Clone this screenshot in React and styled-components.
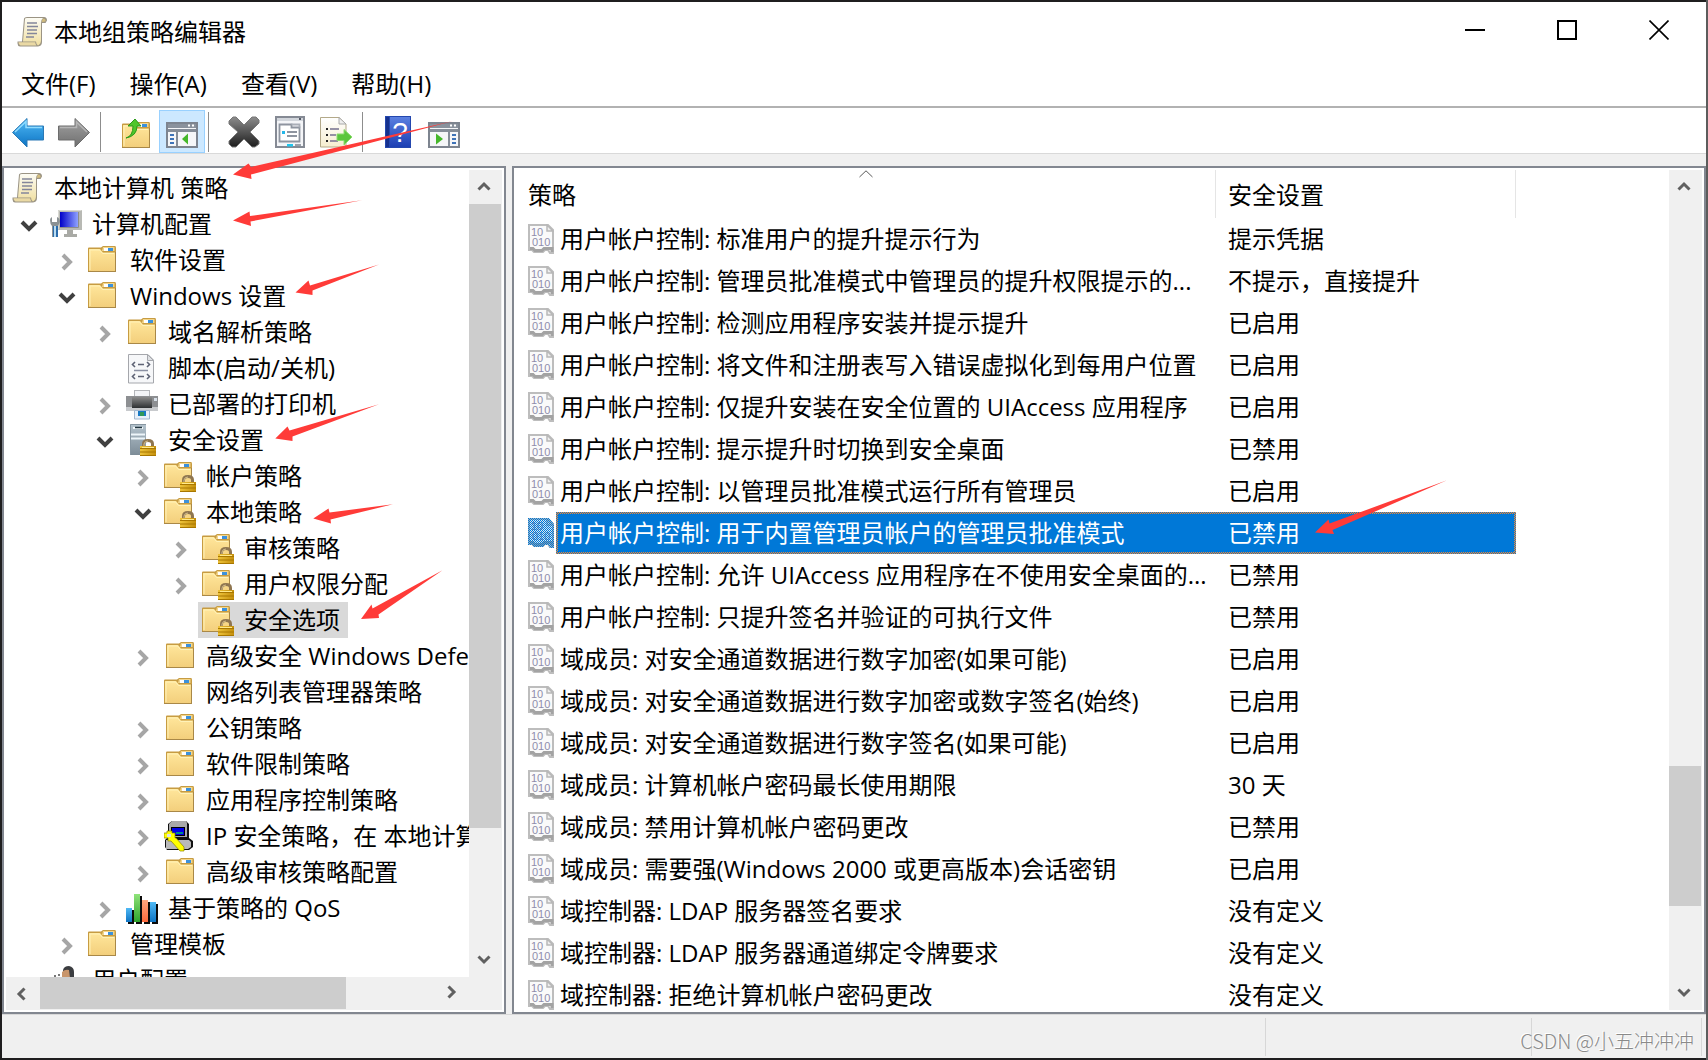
import React from 'react'
import styled, { createGlobalStyle, css } from 'styled-components'


// level is the depth in the tree, state says which chevron the row gets (nothing = leaf)

const treeItems = [
    { name: '本地计算机 策略', level: 0, icon: 'scroll' },
    { name: '计算机配置', level: 1, icon: 'computer', state: 'open' },
    { name: '软件设置', level: 2, icon: 'folderLeft', state: 'closed' },
    { name: 'Windows 设置', level: 2, icon: 'folderLeft', state: 'open' },
    { name: '域名解析策略', level: 3, icon: 'folder', state: 'closed' },
    { name: '脚本(启动/关机)', level: 3, icon: 'script' },
    { name: '已部署的打印机', level: 3, icon: 'printer', state: 'closed' },
    { name: '安全设置', level: 3, icon: 'server', state: 'open' },
    { name: '帐户策略', level: 4, icon: 'locked', state: 'closed' },
    { name: '本地策略', level: 4, icon: 'locked', state: 'open' },
    { name: '审核策略', level: 5, icon: 'locked', state: 'closed' },
    { name: '用户权限分配', level: 5, icon: 'locked', state: 'closed' },
    { name: '安全选项', level: 5, icon: 'locked', selected: true },
    { name: '高级安全 Windows Defender', level: 4, icon: 'folder', state: 'closed' },
    { name: '网络列表管理器策略', level: 4, icon: 'folderLeft' },
    { name: '公钥策略', level: 4, icon: 'folder', state: 'closed' },
    { name: '软件限制策略', level: 4, icon: 'folder', state: 'closed' },
    { name: '应用程序控制策略', level: 4, icon: 'folder', state: 'closed' },
    { name: 'IP 安全策略，在 本地计算机', level: 4, icon: 'ipsec', state: 'closed' },
    { name: '高级审核策略配置', level: 4, icon: 'folder', state: 'closed' },
    { name: '基于策略的 QoS', level: 3, icon: 'qos', state: 'closed' },
    { name: '管理模板', level: 2, icon: 'folderLeft', state: 'closed' },
    { name: '用户配置', level: 1, icon: 'user' },
]

const policies = [
    ['用户帐户控制: 标准用户的提升提示行为', '提示凭据'],
    ['用户帐户控制: 管理员批准模式中管理员的提升权限提示的...', '不提示，直接提升'],
    ['用户帐户控制: 检测应用程序安装并提示提升', '已启用'],
    ['用户帐户控制: 将文件和注册表写入错误虚拟化到每用户位置', '已启用'],
    ['用户帐户控制: 仅提升安装在安全位置的 UIAccess 应用程序', '已启用'],
    ['用户帐户控制: 提示提升时切换到安全桌面', '已禁用'],
    ['用户帐户控制: 以管理员批准模式运行所有管理员', '已启用'],
    ['用户帐户控制: 用于内置管理员帐户的管理员批准模式', '已禁用'],
    ['用户帐户控制: 允许 UIAccess 应用程序在不使用安全桌面的...', '已禁用'],
    ['用户帐户控制: 只提升签名并验证的可执行文件', '已禁用'],
    ['域成员: 对安全通道数据进行数字加密(如果可能)', '已启用'],
    ['域成员: 对安全通道数据进行数字加密或数字签名(始终)', '已启用'],
    ['域成员: 对安全通道数据进行数字签名(如果可能)', '已启用'],
    ['域成员: 计算机帐户密码最长使用期限', '30 天'],
    ['域成员: 禁用计算机帐户密码更改', '已禁用'],
    ['域成员: 需要强(Windows 2000 或更高版本)会话密钥', '已启用'],
    ['域控制器: LDAP 服务器签名要求', '没有定义'],
    ['域控制器: LDAP 服务器通道绑定令牌要求', '没有定义'],
    ['域控制器: 拒绝计算机帐户密码更改', '没有定义'],
]

const selectedPolicy = 7

// Every arrow is: tip, upper barb, upper neck, tail, lower neck, lower barb
const arrows = [
    '233,174.5 248.5,163.5 251,167 453,121 251,174.5 251.5,179',
    '233,220.5 249.5,211.5 250,216 362,200.3 250.5,221.5 251,226',
    '295.5,292.5 308.5,280.5 310,285.5 379,264.5 312.5,290.5 312.5,295',
    '275.3,438.5 287.5,426.5 289.5,430.5 379,404.3 292.5,436.5 292.5,441',
    '313.3,518.5 328.5,508.5 329.5,512.5 393,504.3 330.5,519.5 331,523.5',
    '361,619 371.5,604.5 372.5,608.5 442.5,570.3 378.5,614.5 379,618',
    '1315,532.5 1328.5,519.5 1329.5,523.5 1447,480.3 1332.5,530 1334,534',
]

function ScrollArt() {
    return (
        <g transform="translate(-1 0)">
            <path d="M8 2.5Q8.5 1 11 1H28Q31 1 31 4.500L29.500 7H26V26Q26 30 22 30.500H4Q1.500 30 1.500 27.500V25.500H6Z" fill="#9b9484" />
            <path d="M9 3Q9 2 11 2H27Q25 3.500 25 7V24Q25 28 22 29.500Q20 28 20 25.500H7Z" fill="url(#paper)" />
            <path d="M2.500 26.300H19.200Q19.500 28.800 20.500 29.600H4.500Q2.500 29 2.500 26.300Z" fill="#ead9a4" />
            <path d="M27 2.500Q30 2.500 29.500 5.500L26 6Q26 3 27 2.500Z" fill="#d3bd7d" />
            <path d="M11 7H21M11 10.500H22M11 14H21M11 17.500H21M10 21H18" stroke="#84869a" strokeWidth="1.500" />
        </g>
    )
}

function FolderArt() {
    return (
        <>
            <path d="M2 4.500Q2 3.500 3 3.500H15L17 2H29Q30 2 30 4V28H2Z" fill="#c79c42" />
            <path d="M17 3H28.500V7H16Z" fill="#f3d68c" />
            <rect x="18" y="4" width="5" height="3" fill="#fff" />
            <rect x="22" y="4" width="5" height="3" fill="#3b91dc" />
            <path d="M3 5H14L17 8.500H29V27H3Z" fill="url(#folder)" />
            <path d="M4 26V6H13.500L16.500 9.500H28" fill="none" stroke="#fff2b8" />
            <path d="M2 27.500H30M29.500 8V28" stroke="#a98847" />
        </>
    )
}

function LockArt() {
    return (
        <>
            <path d="M19.500 23V20Q19.500 16.500 24 16.500Q28.500 16.500 28.500 20V23" fill="none" stroke="#8f7650" strokeWidth="3" />
            <path d="M20 22V20Q20.500 17 24 17" fill="none" stroke="#d2bd8d" />
            <rect x="16" y="22" width="16" height="10" fill="url(#lock)" />
            <path d="M16 24.500H32M16 28H32M16 31.500H32" stroke="#a87700" />
            <path d="M18 23.500H30" stroke="#ffe98c" />
        </>
    )
}

function Art({ name }) {
    switch (name) {
        case 'scroll':
            return <ScrollArt />
        case 'folder':
            return <FolderArt />
        case 'folderLeft':
            return <g transform="translate(-2 0)"><FolderArt /></g>
        case 'locked':
            return (
                <>
                    <g transform="translate(-2 0)"><FolderArt /></g>
                    <LockArt />
                </>
            )
        case 'computer':
            return (
                <>
                    <rect x="8" y="2" width="24" height="20" fill="#b8b9b4" />
                    <path d="M8.500 21.500V2.500H31.500" fill="none" stroke="#d9d9d2" />
                    <rect x="10" y="4" width="18" height="15" fill="url(#screen)" />
                    <path d="M28.500 4V19.500H10" fill="none" stroke="#8c8d8a" />
                    <path d="M17 22H23V26H27V29H14V26H17Z" fill="#a9aaa5" />
                    <path d="M0 12Q0 10 2 9V14H7V9Q10 10 10 14L8 18V29H2V18Q0 16 0 12Z" fill="#8b9194" />
                    <rect x="3" y="18" width="5" height="11" fill="#2b6cab" />
                    <rect x="4" y="18" width="2" height="11" fill="#b9dcf2" />
                </>
            )
        case 'script':
            return (
                <>
                    <path d="M2.500 2.500H22L27.500 8V31H2.500Z" fill="#f6f7f9" stroke="#a5a7ac" />
                    <path d="M21.500 2.500V8.500H27.500Z" fill="#dfe1e4" stroke="#a5a7ac" />
                    <path d="M9 10L6.500 12.500L9 15M21 10L23.500 12.500L21 15M12 12.500H18M9 22L6.500 24.500L9 27M21 22L23.500 24.500L21 27M12 24.500H18" fill="none" stroke="#5d6274" strokeWidth="1.600" />
                    <path d="M8 18.500H22" stroke="#8b90a3" strokeWidth="1.500" />
                </>
            )
        case 'printer':
            return (
                <>
                    <rect x="8.500" y="2.500" width="15" height="9" fill="#f2f3f6" stroke="#b4b6ba" />
                    <rect x="0" y="8" width="32" height="14" fill="#8d8f92" />
                    <rect x="0" y="19" width="32" height="4" fill="#c8cacd" />
                    <rect x="6" y="9" width="20" height="11" fill="url(#dark)" />
                    <rect x="28" y="10" width="3" height="3" fill="#d7dfe8" />
                    <path d="M8.500 22.500H23.500V31H8.500Z" fill="#e7f0fa" stroke="#a2b7cf" />
                    <rect x="12" y="23" width="8" height="5" fill="#1979c4" />
                    <rect x="14" y="24" width="4" height="4" fill="#2f9959" />
                </>
            )
        case 'server':
            return (
                <>
                    <rect x="4" y="0" width="16" height="31" fill="url(#server)" />
                    <path d="M4.500 31V.500H20" fill="none" stroke="#8796a1" />
                    <path d="M7 4H17M5 10.500H19M5 14.500H19" stroke="#eef6fa" strokeWidth="2" />
                    <path d="M9 3.500H16" stroke="#21343f" strokeWidth="1.500" />
                    <g transform="translate(-2 0)"><LockArt /></g>
                </>
            )
        case 'ipsec':
            return (
                <>
                    <path d="M4 4L8 1H22L25 4V18L29 21V27L25 30H3L1 27V20L4 17Z" fill="#111" />
                    <path d="M5 4L8 1H22L23 3V17H5Z" fill="#a9a9a9" />
                    <path d="M2 20H25L27 22V27L24 29H2Z" fill="#b9b9b9" />
                    <rect x="7" y="7" width="14" height="9" fill="#000" />
                    <rect x="8" y="8" width="12" height="7" fill="#0000e8" />
                    <path d="M12 13H19" stroke="#008b8b" strokeWidth="2" />
                    <path d="M0 13H3V11H8V13H11V18H12L20 27V31H16L7 21H4V18H0Z" fill="#ff0" stroke="#8a8000" strokeWidth=".700" />
                    <rect x="3" y="14" width="4" height="3" fill="#e0e0e0" />
                </>
            )
        case 'qos':
            return (
                <>
                    <path d="M2 18H8V32H2ZM10 4H16V32H10ZM18 10H24V32H18ZM26 12H32V32H26Z" fill="#0b0b0b" />
                    <rect x="0" y="16" width="6" height="14" fill="url(#blue)" />
                    <rect x="8" y="2" width="6" height="28" fill="url(#green)" />
                    <rect x="16" y="8" width="6" height="22" fill="url(#orange)" />
                    <rect x="24" y="10" width="6" height="20" fill="url(#blue)" />
                </>
            )
        case 'user':
            return (
                <>
                    <path d="M13 6Q14 2 19 2Q24 3 24 8V14H20Q13 12 13 6Z" fill="#3b3d40" />
                    <path d="M12 8Q15 5 19 6L20 14H12Z" fill="#c8956b" />
                    <path d="M4 12H6M8 11H10M9 14H11" stroke="#777" strokeWidth="2" />
                </>
            )
        case 'back':
            return (
                <>
                    <path d="M.500 16.500L15 2.500V10H31.500V24H15V31Z" fill="url(#blue)" stroke="#2b79b5" />
                    <path d="M3 16L14 5.500V11.500H30" fill="none" stroke="#8fdcff" strokeWidth="1.500" />
                </>
            )
        case 'forward':
            return (
                <>
                    <path d="M31.500 16.500L17 2.500V10H.500V24H17V31Z" fill="url(#gray)" stroke="#6c6c6c" />
                    <path d="M2 11.500H18.500V6L29 16" fill="none" stroke="#b5b5b5" strokeWidth="1.500" />
                </>
            )
        case 'up':
            return (
                <>
                    <g transform="translate(0 4)"><FolderArt /></g>
                    <path d="M6 22Q13 20 13 10H8L15 3L21 10H17Q17 20 6 22Z" fill="#4fc62c" stroke="#2c9918" />
                </>
            )
        case 'tree':
        case 'actions':
            return (
                <>
                    <rect x="1" y="7" width="30" height="24" fill="#f5f6f8" stroke="#7d848f" strokeWidth="2" />
                    <rect x="2" y="8" width="28" height="4" fill="#8a929d" />
                    <path d="M22 9.500H24M26 9.500H28" stroke="#fff" strokeWidth="2" />
                    <path d="M2 14.500H30" stroke="#858d98" strokeWidth="3" />
                    {name === 'tree' ? (
                        <>
                            <path d="M11 16V30" stroke="#858d98" strokeWidth="2" />
                            <path d="M4 19H8M4 23H8M4 27H8" stroke="#3e73b8" strokeWidth="2" />
                            <path d="M16 23L22 17.500V28.500Z" fill="#45b72a" />
                        </>
                    ) : (
                        <>
                            <path d="M21 16V30" stroke="#858d98" strokeWidth="2" />
                            <path d="M24 19H28M24 23H28M24 27H28" stroke="#3e73b8" strokeWidth="2" />
                            <path d="M15 23L8 17.500V28.500Z" fill="#45b72a" />
                        </>
                    )}
                </>
            )
        case 'delete':
            return (
                <path d="M1 5L5 1H8L16 9L24 1H28L31 4V7L22 16L31 25V28L27 31H24L16 23L8 31H4L1 28V25L10 16L1 8Z" fill="url(#cross)" stroke="#777" />
            )
        case 'properties':
            return (
                <>
                    <rect x="2" y="1" width="28" height="30" fill="#f4f5f8" stroke="#858a94" strokeWidth="2" />
                    <path d="M3 3.500H29" stroke="#d2d6dc" strokeWidth="3" />
                    <rect x="25" y="2" width="2" height="2" fill="#555b67" />
                    <path d="M5.500 8.500H17.500V11.500H25.500V25.500H5.500Z" fill="#fff" stroke="#8e949f" strokeWidth="1.800" />
                    <path d="M17.500 8.500H25.500V11.500" fill="none" stroke="#a9aeb7" strokeWidth="1.800" />
                    <path d="M13 16H23M13 20H23" stroke="#8e949f" strokeWidth="2" />
                    <rect x="8" y="15" width="3" height="3" fill="#24b7ea" />
                    <rect x="13" y="28" width="6" height="2.500" fill="#20c6ed" />
                    <path d="M21 29H27" stroke="#9aa0aa" strokeWidth="2" />
                </>
            )
        case 'export':
            return (
                <>
                    <path d="M.500 1.500H19L26 8V31H.500Z" fill="url(#sheet)" stroke="#b3a989" />
                    <path d="M19 1.500V8H26Z" fill="#eee" stroke="#aaa" />
                    <path d="M6 13H8M6 19H8M6 25H8" stroke="#222" strokeWidth="2" />
                    <path d="M10 13H19M10 19H16M10 25H18" stroke="#75708f" strokeWidth="1.500" />
                    <path d="M17 18H24V13.500L32 21L24 29V24.500H17Z" fill="#5bc63c" stroke="#8bdc6e" />
                </>
            )
        case 'help':
            return (
                <>
                    <rect x="3" y="0" width="26" height="32" fill="#2447ae" />
                    <rect x="8" y="1" width="20" height="30" fill="url(#help)" />
                    <path d="M5.500 1V31" stroke="#16318d" strokeWidth="3" />
                    <HelpMark x="18" y="26">?</HelpMark>
                </>
            )
        default:
            return null
    }
}

function Icon({ name }) {
    return (
        <IconSvg viewBox="0 0 32 32" aria-hidden="true">
            <Art name={name} />
        </IconSvg>
    )
}

function PolicyIcon({ selected }) {
    return (
        <PolicySvg viewBox="0 0 26 30" aria-hidden="true">
            <path d="M1 1H20L25 6V29H22L20 26H17L15 28H6L4 26H1Z" fill="#fafafa" stroke="#bdbdbd" strokeWidth="2" />
            <path d="M19 1V7H25Z" fill="#eee" stroke="#b8b8b8" strokeWidth="1.500" />
            <path d="M2 24.500H5L7 26.500H14L16 24.500H24V28" fill="none" stroke="#a3a3a3" strokeWidth="3" />
            <Digits x="3" y="12">10</Digits>
            <Digits x="4" y="22">010</Digits>
            {selected && <path d="M0 0H21L26 6V30H22L20 27H17L15 29H6L4 27H0Z" fill="url(#dither)" />}
        </PolicySvg>
    )
}

function Chevron({ direction, thick }) {
    const turn = { up: 0, right: 90, down: 180, left: 270 }[direction]

    return (
        <ChevronSvg viewBox="0 0 18 18" aria-hidden="true">
            <path
                d={thick ? 'M2 13L9 6L16 13' : 'M3.500 11.500L9 6L14.500 11.500'}
                transform={`rotate(${turn} 9 9)`}
                fill="none"
                stroke="currentColor"
                strokeWidth={thick ? 4 : 3}
            />
        </ChevronSvg>
    )
}

// before, thumb and after are the shares of the track
function ScrollBar({ horizontal, before, thumb, after }) {
    return (
        <Bar $horizontal={horizontal}>
            <BarButton aria-label={horizontal ? '向左滚动' : '向上滚动'}>
                <Chevron direction={horizontal ? 'left' : 'up'} />
            </BarButton>
            <BarSpace $share={before} />
            <BarThumb $share={thumb} $horizontal={horizontal} />
            <BarSpace $share={after} />
            <BarButton aria-label={horizontal ? '向右滚动' : '向下滚动'}>
                <Chevron direction={horizontal ? 'right' : 'down'} />
            </BarButton>
        </Bar>
    )
}

function Gradient({ id, from, to, flat }) {
    return (
        <linearGradient id={id} x1="0" y1="0" x2={flat ? 1 : 0} y2={flat ? 0 : 1}>
            <stop offset="0" stopColor={from} />
            <stop offset="1" stopColor={to} />
        </linearGradient>
    )
}

function SharedDefs() {
    return (
        <DefsSvg aria-hidden="true">
            <defs>
                <Gradient id="paper" from="#fdfcf4" to="#f0dfa0" />
                <Gradient id="folder" from="#ffe69b" to="#f3cf7c" />
                <Gradient id="lock" from="#eec33a" to="#c48f0c" flat />
                <Gradient id="screen" from="#0000c8" to="#8fa2ff" flat />
                <Gradient id="dark" from="#8a8a8a" to="#2e3032" />
                <Gradient id="server" from="#b5c4ce" to="#7d8c97" />
                <Gradient id="blue" from="#4fb9f5" to="#0d74c4" />
                <Gradient id="green" from="#8fe37a" to="#2ea32c" />
                <Gradient id="orange" from="#ffa57e" to="#ff6a3c" />
                <Gradient id="gray" from="#a2a2a2" to="#6f6f6f" />
                <Gradient id="cross" from="#8c8c8c" to="#1d1d1d" />
                <Gradient id="sheet" from="#ffffff" to="#f6eecf" />
                <Gradient id="help" from="#5b80e0" to="#1c3fb4" />
                <pattern id="dither" width="2" height="2" patternUnits="userSpaceOnUse">
                    <rect width="2" height="2" fill="#0078d7" fillOpacity=".15" />
                    <rect width="1" height="1" fill="#0078d7" />
                    <rect x="1" y="1" width="1" height="1" fill="#0078d7" />
                </pattern>
            </defs>
        </DefsSvg>
    )
}

function TitleBar() {
    return (
        <Title>
            <Icon name="scroll" />
            <TitleText>本地组策略编辑器</TitleText>
            <WindowButton aria-label="最小化">
                <svg width="20" height="20" viewBox="0 0 20 20"><path d="M0 10H20" stroke="#000" strokeWidth="2" /></svg>
            </WindowButton>
            <WindowButton aria-label="最大化">
                <svg width="20" height="20" viewBox="0 0 20 20"><rect x="1" y="1" width="18" height="18" fill="none" stroke="#000" strokeWidth="2" /></svg>
            </WindowButton>
            <WindowButton aria-label="关闭">
                <svg width="20" height="20" viewBox="0 0 20 20"><path d="M.500 .500L19.500 19.500M19.500 .500L.500 19.500" stroke="#000" strokeWidth="1.600" /></svg>
            </WindowButton>
        </Title>
    )
}

function Tools() {
    return (
        <ToolBar>
            <ToolButton aria-label="后退"><Icon name="back" /></ToolButton>
            <ToolButton aria-label="前进"><Icon name="forward" /></ToolButton>
            <Separator />
            <ToolButton aria-label="向上一级"><Icon name="up" /></ToolButton>
            <ToolButton aria-label="显示/隐藏控制台树" $active><Icon name="tree" /></ToolButton>
            <Separator />
            <ToolButton aria-label="删除"><Icon name="delete" /></ToolButton>
            <ToolButton aria-label="属性"><Icon name="properties" /></ToolButton>
            <ToolButton aria-label="导出列表"><Icon name="export" /></ToolButton>
            <Separator />
            <ToolButton aria-label="帮助"><Icon name="help" /></ToolButton>
            <ToolButton aria-label="显示/隐藏操作窗格"><Icon name="actions" /></ToolButton>
        </ToolBar>
    )
}

function TreeRow({ name, level, icon, state, selected }) {
    return (
        <Row role="treeitem" $level={level} aria-selected={!!selected}>
            {level > 0 && (
                <Toggle $open={state === 'open'} as={state ? 'button' : 'span'} aria-label={state && '展开或折叠'}>
                    {state && <Chevron thick direction={state === 'open' ? 'down' : 'right'} />}
                </Toggle>
            )}
            <RowLabel $selected={selected}>
                <Icon name={icon} />
                {name}
            </RowLabel>
        </Row>
    )
}

function PolicyTable() {
    return (
        <Table>
            <thead>
                <tr>
                    <HeadCell $width="700px">
                        策略
                        <SortMark viewBox="0 0 14 8" aria-hidden="true">
                            <path d="M.500 7L7 .800L13.500 7" fill="none" stroke="#5a5a5a" />
                        </SortMark>
                    </HeadCell>
                    <HeadCell $width="300px">安全设置</HeadCell>
                    <HeadCell $last />
                </tr>
            </thead>
            <tbody>
                {policies.map(([name, value], i) => (
                    <tr key={name}>
                        <Cell>
                            <NameCell>
                                <PolicyIcon selected={i === selectedPolicy} />
                                <CellText $side="left" $selected={i === selectedPolicy}>{name}</CellText>
                            </NameCell>
                        </Cell>
                        <Cell>
                            <CellText $side="right" $selected={i === selectedPolicy}>{value}</CellText>
                        </Cell>
                        <Cell />
                    </tr>
                ))}
            </tbody>
        </Table>
    )
}

function App() {
    return (
        <Desktop>
            <GlobalStyle />
            <SharedDefs />
            <Window>
                <TitleBar />
                <Menu>
                    <MenuButton>文件(F)</MenuButton>
                    <MenuButton>操作(A)</MenuButton>
                    <MenuButton>查看(V)</MenuButton>
                    <MenuButton>帮助(H)</MenuButton>
                </Menu>
                <Tools />
                <Panes>
                    <TreePane>
                        <PaneRow>
                            <Tree role="tree">
                                {treeItems.map(item => <TreeRow key={item.name} {...item} />)}
                            </Tree>
                            <ScrollBar before={0} thumb={624} after={115} />
                        </PaneRow>
                        <BottomBar>
                            <ScrollBar horizontal before={0} thumb={306} after={89} />
                        </BottomBar>
                    </TreePane>
                    <ListPane>
                        <PaneRow>
                            <ListScroll>
                                <PolicyTable />
                            </ListScroll>
                            <ScrollBar before={562} thumb={140} after={70} />
                        </PaneRow>
                    </ListPane>
                </Panes>
                <StatusBar>
                    <StatusCell />
                    <StatusCell $width="266px" />
                    <StatusCell $width="170px" />
                </StatusBar>
            </Window>
            <Arrows aria-hidden="true">
                {arrows.map(points => <polygon key={points} points={points} fill="#ff3b38" />)}
            </Arrows>
            <Watermark>CSDN @小五冲冲冲</Watermark>
        </Desktop>
    )
}

export default App


const GlobalStyle = createGlobalStyle`
    * {
        box-sizing: border-box;
    }

    body {
        margin: 0;
        overflow: hidden;
        font-family: "Open Sans", "Noto Sans CJK SC", sans-serif;
        font-size: 24px;
        line-height: 36px;
        color: #000;
    }

    button {
        padding: 0;
        border: 0;
        background: none;
        color: inherit;
        font: inherit;
    }
`

const Desktop = styled.div`
    position: relative;
    display: flex;
    height: 100vh;
    padding: 2px;
    background: linear-gradient(90deg, #2a2a2b 50%, #5c5c5c 50%);
    overflow: hidden;
`

// the shadow darkens the frame on every side but the right one
const Window = styled.div`
    flex: 1;
    min-width: 0;
    display: flex;
    flex-direction: column;
    background: #f0f0f0;
    box-shadow: 0 0 0 2px #1f1e1f;
    clip-path: inset(-2px 0 -2px -2px);
`

const Title = styled.header`
    display: flex;
    align-items: center;
    flex-shrink: 0;
    height: 60px;
    padding: 0 1px 0 15px;
    background: #fff;
`

const TitleText = styled.h1`
    flex: 1;
    margin: 0;
    padding-left: 5px;
    font-size: 24px;
    font-weight: 400;
`

const WindowButton = styled.button`
    display: grid;
    place-items: center;
    width: 92px;
    height: 56px;
    align-self: flex-start;
`

const Menu = styled.nav`
    display: flex;
    align-items: center;
    flex-shrink: 0;
    height: 46px;
    padding-left: 2px;
    background: #fff;
    border-bottom: 2px solid #b2b2b2;
`

const MenuButton = styled.button`
    padding: 0 17px;
`

const ToolBar = styled.div`
    display: flex;
    align-items: center;
    flex-shrink: 0;
    height: 46px;
    padding: 2px 3px 0;
    background: #fff;
    border-bottom: 1px solid #d9d9d9;
`

const ToolButton = styled.button`
    display: grid;
    place-items: center;
    width: 46px;
    height: 43px;
    border: 1px solid ${props => props.$active ? '#99d1ff' : 'transparent'};
    background: ${props => props.$active ? '#cce8ff' : 'transparent'};
`

const Separator = styled.span`
    width: 1px;
    height: 40px;
    margin: 0 12px 0 3px;
    background: #8d8d8d;
`

const IconSvg = styled.svg`
    flex-shrink: 0;
    width: 32px;
    height: 32px;
`

const HelpMark = styled.text`
    font-family: "Liberation Sans", sans-serif;
    font-size: 28px;
    text-anchor: middle;
    fill: #fff;
`

const Panes = styled.main`
    flex: 1;
    min-height: 0;
    display: flex;
    gap: 6px;
    padding-top: 12px;
`

const Pane = styled.section`
    display: flex;
    flex-direction: column;
    padding: 2px;
    background: #fff;
    border: 2px solid #828790;
`

const TreePane = styled(Pane)`
    width: 504px;
    flex-shrink: 0;
`

const ListPane = styled(Pane)`
    flex: 1;
    min-width: 0;
`

const PaneRow = styled.div`
    flex: 1;
    min-height: 0;
    display: flex;
`

const Tree = styled.ul`
    flex: 1;
    min-width: 0;
    margin: 0;
    padding: 0 0 0 2px;
    list-style: none;
    overflow: hidden;
`

// the first two levels share the left edge, the chevron fills the first step
const Row = styled.li`
    display: flex;
    height: 36px;
    padding-left: ${props => Math.max(props.$level - 1, 0) * 38}px;
    white-space: nowrap;
`

const Toggle = styled.button`
    display: grid;
    place-items: center;
    flex-shrink: 0;
    width: 38px;
    height: 36px;
    padding: 3px 0 0 3px;
    color: ${props => props.$open ? '#404040' : '#a6a6a6'};
`

const RowLabel = styled.span`
    display: flex;
    align-items: center;
    gap: 10px;
    padding: 0 8px 0 4px;
    background: ${props => props.$selected ? '#d9d9d9' : 'transparent'};
`

const ChevronSvg = styled.svg`
    width: 18px;
    height: 18px;
`

const Bar = styled.div`
    display: flex;
    flex-direction: ${props => props.$horizontal ? 'row' : 'column'};
    flex-shrink: 0;
    background: #f0f0f0;
    ${props => props.$horizontal ? css`
        flex: 1;
        height: 33px;
    ` : css`
        width: 33px;
    `}
`

const BarButton = styled.button`
    display: grid;
    place-items: center;
    flex: 0 0 34px;
    padding-right: 3px;
    color: #606060;

    &:last-child {
        padding: 0 3px 3px 0;
    }
`

const BarSpace = styled.div`
    flex: ${props => props.$share} 0 0;
`

const BarThumb = styled.div`
    flex: ${props => props.$share} 0 0;
    margin: ${props => props.$horizontal ? '0 0 1px' : '0 1px 0 0'};
    background: #cdcdcd;
`

const BottomBar = styled.div`
    display: flex;
    padding-right: 33px;
    background: #f0f0f0;
`

const ListScroll = styled.div`
    flex: 1;
    min-width: 0;
    overflow: hidden;
`

const Table = styled.table`
    width: 100%;
    table-layout: fixed;
    border-collapse: collapse;
    text-align: left;
`

const HeadCell = styled.th`
    position: relative;
    width: ${props => props.$width || 'auto'};
    height: 48px;
    padding: 2px 12px 0;
    font-weight: 400;
    box-shadow: ${props => props.$last ? 'none' : 'inset -1px 0 #e5e5e5'};
`

const SortMark = styled.svg`
    position: absolute;
    top: 0;
    left: 50%;
    width: 14px;
    height: 8px;
    margin-left: -7px;
`

const Cell = styled.td`
    height: 42px;
    padding: 0;
    white-space: nowrap;
`

const NameCell = styled.div`
    display: flex;
    align-items: center;
    padding-left: 12px;
    gap: 2px;
`

const PolicySvg = styled.svg`
    flex-shrink: 0;
    width: 26px;
    height: 30px;
`

const Digits = styled.text`
    font-family: "Liberation Sans", sans-serif;
    font-size: 11px;
    fill: #8f8dac;
`

// the selected row has a checkered frame around the blue
const CellText = styled.div`
    flex: 1;
    height: 42px;
    line-height: 38px;
    padding-left: ${props => props.$side === 'left' ? '2px' : '12px'};
    border: 2px solid transparent;
    ${props => props.$side === 'right' && css`
        border-left-width: 0;
    `}
    ${props => props.$side === 'left' && css`
        border-right-width: 0;
    `}
    ${props => props.$selected && css`
        color: #fff;
        background:
            linear-gradient(#0078d7, #0078d7) padding-box,
            repeating-conic-gradient(#ff8728 0 25%, #0078d7 0 50%) 0 0 / 2px 2px border-box;
    `}
`

const StatusBar = styled.footer`
    display: flex;
    flex-shrink: 0;
    height: 44px;
    padding: 3px 4px 2px 0;
    border-top: 1px solid #d9d9d9;
`

const StatusCell = styled.div`
    flex: ${props => props.$width ? `0 0 ${props.$width}` : 1};
    border-right: 1px solid #d7d7d7;
`

const Arrows = styled.svg`
    position: absolute;
    top: 0;
    left: 0;
    width: 100%;
    height: 100%;
    pointer-events: none;
`

const Watermark = styled.span`
    position: absolute;
    right: 14px;
    bottom: 1px;
    font-family: "Noto Sans CJK SC", sans-serif;
    font-size: 20px;
    font-weight: 300;
    color: #8a8a8a;
    text-shadow: -1px -1px #fff;
`

const DefsSvg = styled.svg`
    position: absolute;
    width: 0;
    height: 0;
`
